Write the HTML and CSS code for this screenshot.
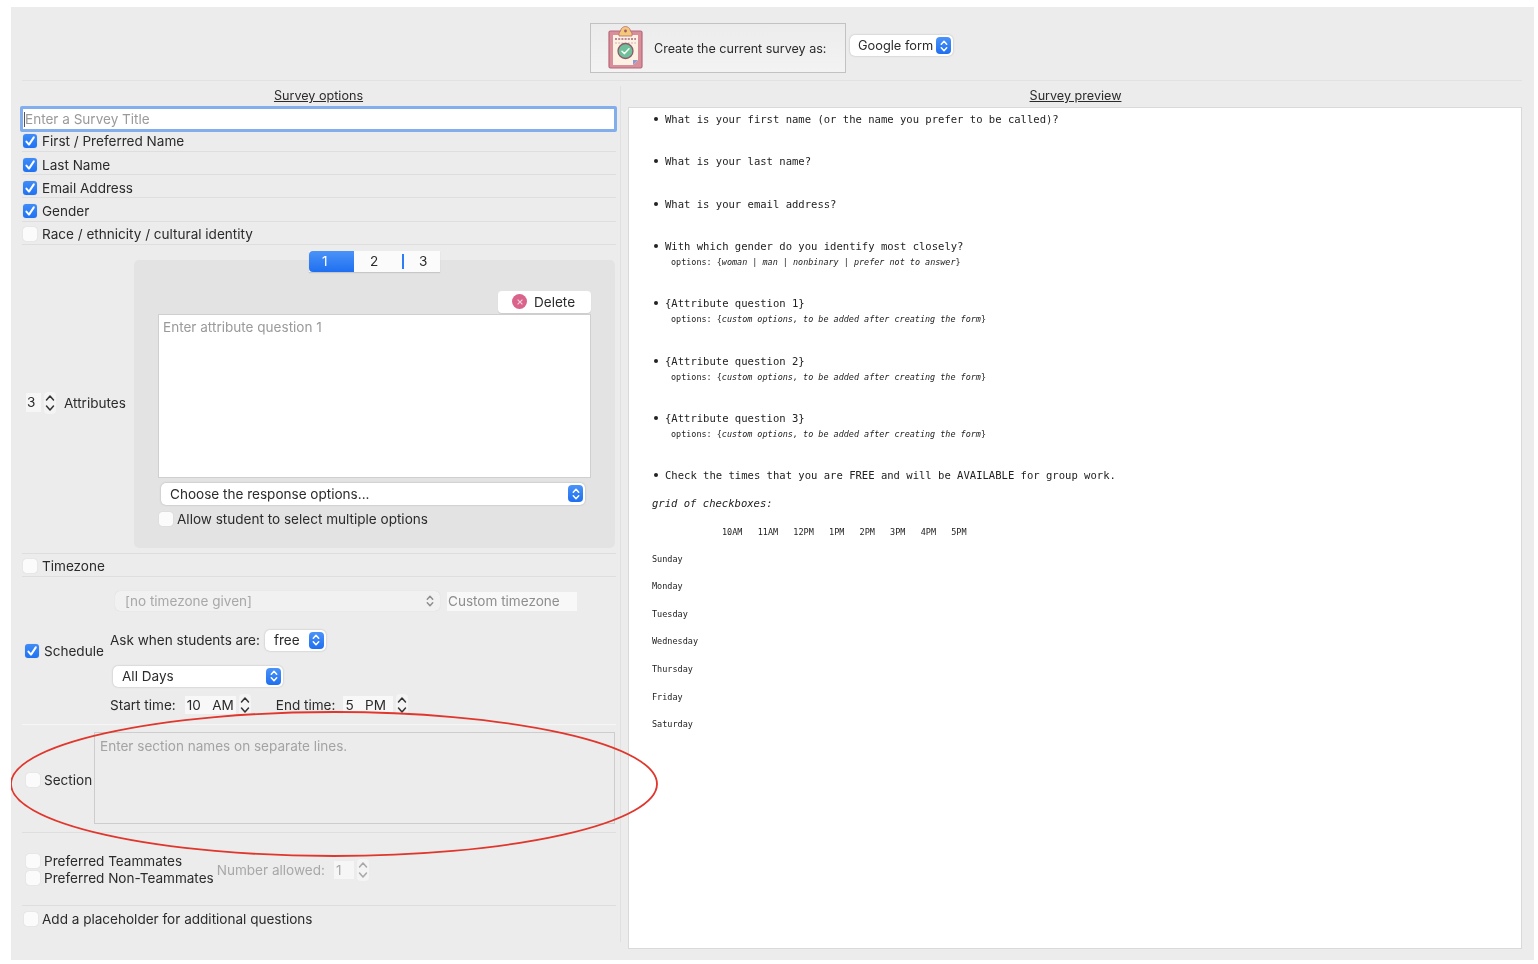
FILE: index.html
```html
<!DOCTYPE html>
<html lang="en">
<head>
  <meta charset="UTF-8" />
  <title>Survey maker</title>
  <link rel="stylesheet" href="styles.css">
</head>
<body>
  <svg class="defs" width="0" height="0">
    <symbol id="tick" viewBox="0 0 14 14"><path d="M3.4 7.6 6 10.6 10.8 3.4" fill="none" stroke="#fff" stroke-width="2" stroke-linecap="round" stroke-linejoin="round"/></symbol>
    <symbol id="updown" viewBox="0 0 14 20"><path d="M4 8 7 4.8 10 8M4 12 7 15.2 10 12" fill="none" stroke="currentColor" stroke-width="1.7" stroke-linecap="round" stroke-linejoin="round"/></symbol>
    <symbol id="spin-arrows" viewBox="0 0 12 22"><path d="M2.500 8 6 4 9.500 8M2.500 14 6 18 9.500 14" fill="none" stroke="currentColor" stroke-width="1.500" stroke-linecap="round" stroke-linejoin="round"/></symbol>
  </svg>

  <div class="window">
    <header class="topbar">
      <button class="create-btn" type="button">
        <svg class="clipboard" width="36" height="44" viewBox="0 0 36 44">
          <rect x="1" y="5" width="33" height="37" rx="1.5" fill="#d78f9a" stroke="#b8677a" stroke-width="1.2"/>
          <path d="M5 9H30V34L25 39H5Z" fill="#fdf1e4"/>
          <path d="M25 39V34H30Z" fill="#8f9ad0"/>
          <path d="M11 7 12.5 5C13 1.5 16 .5 17.5 .5S22 1.5 22.500 5L24 7V10H11Z" fill="#f2c879" stroke="#b8677a" stroke-width=".8"/>
          <circle cx="17.500" cy="5" r="1.400" fill="#a8566b"/>
          <path d="M7 13H28" stroke="#b98a94" stroke-width="2" stroke-dasharray="2 1.200"/>
          <path d="M7 17H28" stroke="#cfb2b5" stroke-width="1" stroke-dasharray="2 1.200"/>
          <circle cx="17.500" cy="25" r="7.500" fill="#6fc09a" stroke="#8c5a6a" stroke-width="1.300"/>
          <path d="M14 25.200 16.500 27.600 21 22.800" fill="none" stroke="#f3fff7" stroke-width="1.500" stroke-linecap="round" stroke-linejoin="round"/>
        </svg>
        <span>Create the current survey as:</span>
      </button>
      <div class="select select-form">
        <span>Google form</span>
        <span class="select-arrow"><svg width="14" height="18"><use href="#updown"/></svg></span>
      </div>
    </header>

    <div class="columns">
      <section class="options">
        <h2 class="col-title">Survey options</h2>
        <input class="title-input" type="text" placeholder="Enter a Survey Title">

        <div class="row row-first"><span class="box on"><svg width="14" height="14"><use href="#tick"/></svg></span>First / Preferred Name</div>
        <div class="row"><span class="box on"><svg width="14" height="14"><use href="#tick"/></svg></span>Last Name</div>
        <div class="row"><span class="box on"><svg width="14" height="14"><use href="#tick"/></svg></span>Email Address</div>
        <div class="row"><span class="box on"><svg width="14" height="14"><use href="#tick"/></svg></span>Gender</div>
        <div class="row"><span class="box"></span>Race / ethnicity / cultural identity</div>

        <div class="attributes">
          <div class="attr-count">
            <span class="spin-value">3</span>
            <span class="spinner"><svg width="12" height="22"><use href="#spin-arrows"/></svg></span>
            <span class="attr-label">Attributes</span>
          </div>
          <div class="attr-panel">
            <div class="tabs">
              <span class="tab tab-active">1</span>
              <span class="tab tab-mid">2</span>
              <span class="tab tab-last">3</span>
            </div>
            <div class="delete-wrap">
              <button class="delete-btn" type="button">
                <span class="delete-icon"><svg width="14" height="14" viewBox="0 0 14 14"><path d="M4.600 4.600 9.400 9.400M9.400 4.600 4.600 9.400" stroke="#f6d5de" stroke-width="1.100"/></svg></span>
                Delete
              </button>
            </div>
            <textarea class="attr-question" placeholder="Enter attribute question 1"></textarea>
            <div class="select select-response">
              <span>Choose the response options...</span>
              <span class="select-arrow"><svg width="14" height="18"><use href="#updown"/></svg></span>
            </div>
            <div class="multi"><span class="box"></span>Allow student to select multiple options</div>
          </div>
        </div>

        <div class="row row-timezone"><span class="box"></span>Timezone</div>

        <div class="tz-controls">
          <div class="select select-tz">
            <span>[no timezone given]</span>
            <svg class="tz-arrow" width="14" height="18"><use href="#updown"/></svg>
          </div>
          <input class="tz-custom" type="text" placeholder="Custom timezone">
        </div>

        <div class="schedule">
          <div class="schedule-check"><span class="box on"><svg width="14" height="14"><use href="#tick"/></svg></span>Schedule</div>
          <div class="schedule-body">
            <div class="ask">
              Ask when students are:
              <div class="select select-free">
                <span>free</span>
                <span class="select-arrow"><svg width="14" height="18"><use href="#updown"/></svg></span>
              </div>
            </div>
            <div class="select select-days">
              <span>All Days</span>
              <span class="select-arrow"><svg width="14" height="18"><use href="#updown"/></svg></span>
            </div>
          </div>
        </div>
        <div class="times">
          <span>Start time:</span>
          <span class="time-value time-start">10&nbsp;&nbsp;&nbsp;AM</span>
          <span class="spinner"><svg width="12" height="22"><use href="#spin-arrows"/></svg></span>
          <span class="end-label">End time:</span>
          <span class="time-value time-end">5&nbsp;&nbsp;&nbsp;PM</span>
          <span class="spinner"><svg width="12" height="22"><use href="#spin-arrows"/></svg></span>
        </div>

        <div class="section-row">
          <div class="section-check"><span class="box"></span>Section</div>
          <textarea class="section-names" placeholder="Enter section names on separate lines."></textarea>
        </div>

        <div class="teammates">
          <div class="team-checks">
            <div class="team-line"><span class="box"></span>Preferred Teammates</div>
            <div class="team-line"><span class="box"></span>Preferred Non-Teammates</div>
          </div>
          <span class="number-label">Number allowed:</span>
          <span class="number-value">1</span>
          <span class="spinner spinner-off"><svg width="12" height="22"><use href="#spin-arrows"/></svg></span>
        </div>

        <div class="row row-extra"><span class="box"></span>Add a placeholder for additional questions</div>
      </section>

      <section class="preview-col">
        <h2 class="col-title">Survey preview</h2>
        <div class="preview">
          <div class="q"><p class="q-text">What is your first name (or the name you prefer to be called)?</p></div>
          <div class="q"><p class="q-text">What is your last name?</p></div>
          <div class="q"><p class="q-text">What is your email address?</p></div>
          <div class="q">
            <p class="q-text">With which gender do you identify most closely?</p>
            <p class="q-opts">options: {<i>woman</i> | <i>man</i> | <i>nonbinary</i> | <i>prefer not to answer</i>}</p>
          </div>
          <div class="q">
            <p class="q-text">{Attribute question 1}</p>
            <p class="q-opts">options: {<i>custom options, to be added after creating the form</i>}</p>
          </div>
          <div class="q">
            <p class="q-text">{Attribute question 2}</p>
            <p class="q-opts">options: {<i>custom options, to be added after creating the form</i>}</p>
          </div>
          <div class="q">
            <p class="q-text">{Attribute question 3}</p>
            <p class="q-opts">options: {<i>custom options, to be added after creating the form</i>}</p>
          </div>
          <div class="q q-last"><p class="q-text">Check the times that you are FREE and will be AVAILABLE for group work.</p></div>
          <p class="grid-note">grid of checkboxes:</p>
          <div class="hours">
            <span>10AM</span><span>11AM</span><span>12PM</span><span>1PM</span><span>2PM</span><span>3PM</span><span>4PM</span><span>5PM</span>
          </div>
          <ul class="days">
            <li>Sunday</li>
            <li>Monday</li>
            <li>Tuesday</li>
            <li>Wednesday</li>
            <li>Thursday</li>
            <li>Friday</li>
            <li>Saturday</li>
          </ul>
        </div>
      </section>
    </div>

    <svg class="ring" width="660" height="156" viewBox="0 0 660 156">
      <ellipse cx="324" cy="78" rx="323" ry="72" fill="none" stroke="#e0362c" stroke-width="1.800"/>
    </svg>
  </div>
</body>
</html>
```

FILE: styles.css
```css
* {
  box-sizing: border-box;
}

body {
  margin: 0;
  background: #fff;
  font-family: Inter, Roboto, "Liberation Sans", sans-serif;
  font-size: 13.550px;
  color: #2b2b2b;
}

.defs {
  position: absolute;
}

.window {
  position: relative;
  width: 1523px;
  height: 953px;
  margin: 7px 0 0 11px;
  background: #ececec;
  overflow: hidden;
  filter: blur(.45px);
}

/* top bar */
.topbar {
  display: flex;
  align-items: flex-start;
  height: 74px;
  padding: 16px 0 0 568px;
  margin: 0 12px 0 11px;
  border-bottom: 1px solid #e2e2e2;
}

.create-btn {
  display: flex;
  align-items: center;
  width: 256px;
  height: 50px;
  padding: 0 0 0 17px;
  border: 1.500px solid #c2c2c2;
  background: linear-gradient(#ececec, #f3f3f3);
  font: inherit;
  font-size: 12.550px;
  color: #2b2b2b;
}

.clipboard {
  margin-right: 10px;
}

.select {
  display: flex;
  align-items: center;
  justify-content: space-between;
  height: 21px;
  padding-left: 9px;
  padding-right: 3px;
  background: #fff;
  border-radius: 5px;
  box-shadow: 0 0 2px rgba(0, 0, 0, .25);
}

.select-arrow {
  display: flex;
  align-items: center;
  justify-content: center;
  width: 15px;
  height: 17px;
  border-radius: 4px;
  background: linear-gradient(#4b93f8, #1f6ff0);
  color: #fff;
}

.select-form {
  width: 103px;
  margin: 12px 0 0 4px;
  padding-left: 8px;
  padding-right: 2px;
  font-size: 12.800px;
}

/* columns */
.columns {
  display: flex;
  height: 868px;
}

.options {
  width: 598px;
  margin-left: 11px;
  padding-right: 5px;
}

.col-title {
  margin: 0;
  height: 25px;
  padding-top: 7px;
  font-size: 12.600px;
  font-weight: 400;
  line-height: 16px;
  text-align: center;
  text-decoration: underline;
}

.title-input {
  display: block;
  width: 597px;
  height: 26px;
  margin-left: -2px;
  padding: 0 2px;
  border: 3px solid #82aeee;
  border-radius: 2px;
  outline: 0;
  background: #fff linear-gradient(#555, #555) 1px center / 1px 15px no-repeat;
  font: inherit;
}

input::placeholder,
textarea::placeholder {
  color: #9a9a9a;
  opacity: 1;
}

.row {
  display: flex;
  align-items: center;
  gap: 5px;
  height: 23.200px;
  padding: 3px 0 0 1px;
  border-bottom: 1px solid #dedede;
  width: 594px;
}

.row-first {
  height: 20px;
  padding: 0 0 2px 1px;
}

.box {
  display: inline-flex;
  flex: none;
  width: 14px;
  height: 14px;
  border-radius: 3px;
  background: #fbfbfb;
  box-shadow: 0 0 1px rgba(0, 0, 0, .2);
}

.box.on {
  background: linear-gradient(#3f8cf8, #1f72f2);
}

/* attributes */
.attributes {
  display: flex;
  height: 309px;
  border-bottom: 1px solid #dedede;
  width: 594px;
}

.attr-count {
  display: flex;
  align-items: center;
  width: 112px;
  padding-left: 4px;
  padding-top: 8px;
}

.spin-value {
  width: 15px;
  height: 19px;
  padding-left: 1px;
  line-height: 19px;
  background: #f6f6f6;
}

.spinner {
  display: inline-flex;
  flex: none;
  width: 12px;
  height: 22px;
  margin-left: 3px;
  border-radius: 4px;
  background: #f4f4f4;
  color: #333;
}

.attr-label {
  margin-left: 8px;
}

.attr-panel {
  display: flex;
  flex-direction: column;
  width: 481px;
  height: 288px;
  margin-top: 15px;
  padding: 0 24px;
  border-radius: 5px;
  background: #e3e3e3;
}

.tabs {
  display: flex;
  align-self: center;
  height: 21px;
  margin-top: -9px;
  background: #fbfbfb;
  box-shadow: 0 1px 1px rgba(0, 0, 0, .12);
}

.tab {
  line-height: 21px;
}

.tab-active {
  width: 45px;
  padding-left: 13px;
  border-radius: 4px 0 0 4px;
  background: linear-gradient(#4b93f8, #1f6ff0);
  color: #fff;
}

.tab-mid {
  width: 48px;
  padding-left: 16px;
}

.tab-last {
  width: 38px;
  padding-left: 17px;
  background: linear-gradient(#2f7df6, #2f7df6) left center / 2px 15px no-repeat;
}

.delete-wrap {
  display: flex;
  justify-content: flex-end;
  margin-top: 19px;
}

.delete-btn {
  display: flex;
  align-items: center;
  gap: 7px;
  width: 93px;
  height: 22px;
  padding: 0 0 0 14px;
  border: 0;
  border-radius: 4px;
  background: #fff;
  box-shadow: 0 1px 1px rgba(0, 0, 0, .1);
  font: inherit;
  color: #2b2b2b;
}

.delete-icon {
  display: inline-flex;
  align-items: center;
  justify-content: center;
  width: 15px;
  height: 15px;
  border-radius: 50%;
  background: #d9638a;
}

.attr-question {
  display: block;
  width: 433px;
  height: 164px;
  margin-top: 1px;
  padding: 4px 4px;
  border: 1px solid #cfcfcf;
  background: #fff;
  font: inherit;
  resize: none;
}

.select-response {
  width: 424px;
  height: 22px;
  margin: 5px 0 0 3px;
  padding-left: 9px;
  padding-right: 2px;
}

.multi {
  display: flex;
  align-items: center;
  gap: 4px;
  height: 14px;
  margin: 7px 0 0 1px;
}

.row-timezone {
  height: 23px;
}

.tz-controls {
  display: flex;
  align-items: flex-start;
  gap: 7px;
  padding: 14px 0 0 93px;
  color: #a8a8a8;
}

.select-tz {
  width: 325px;
  height: 20px;
  padding-left: 10px;
  background: #f1f1f1;
  box-shadow: 0 0 1px rgba(0, 0, 0, .15);
}

.tz-arrow {
  color: #8f8f8f;
}

.tz-custom {
  width: 130px;
  height: 19px;
  margin-top: 1px;
  padding: 0 1px;
  border: 0;
  background: #f8f8f8;
  font: inherit;
}

.tz-custom::placeholder {
  color: #8e8e8e;
}

.schedule {
  display: flex;
  margin-top: 19px;
}

.schedule-check {
  display: flex;
  align-items: center;
  align-self: flex-start;
  gap: 5px;
  width: 88px;
  padding: 13px 0 0 3px;
}

.schedule-body {
  display: flex;
  flex-direction: column;
  gap: 15px;
}

.ask {
  display: flex;
  align-items: center;
  gap: 5px;
}

.select-free {
  width: 61px;
  padding-right: 2px;
}

.select-days {
  width: 170px;
  margin-left: 3px;
  padding-right: 2px;
}

.times {
  display: flex;
  align-items: center;
  height: 22px;
  margin-top: 7px;
  padding-left: 88px;
}

.time-value {
  height: 18px;
  line-height: 18px;
  padding-left: 2px;
  background: #f8f8f8;
}

.time-start {
  width: 51px;
  margin-left: 9px;
}

.end-label {
  margin-left: 25px;
}

.time-end {
  width: 50px;
  margin-left: 8px;
}

.section-row {
  display: flex;
  align-items: center;
  width: 594px;
  height: 109px;
  margin-top: 8px;
  border-top: 1px solid #f6f6f6;
  border-bottom: 1px solid #dedede;
}

.section-check {
  display: flex;
  align-items: center;
  gap: 4px;
  width: 72px;
  padding: 4px 0 0 4px;
  flex: none;
}

.section-names {
  display: block;
  width: 521px;
  height: 92px;
  padding: 5px;
  border: 1px solid #cdcdcd;
  background: #ececec;
  font: inherit;
  resize: none;
}

.section-names::placeholder {
  color: #a3a3a3;
}

.teammates {
  display: flex;
  align-items: center;
  height: 73px;
  width: 594px;
  padding: 2px 0 0 4px;
  border-bottom: 1px solid #dedede;
}

.team-line {
  display: flex;
  align-items: center;
  gap: 4px;
  height: 17px;
}

.number-label {
  margin-left: 3px;
  color: #a8a8a8;
}

.number-value {
  width: 20px;
  height: 18px;
  margin-left: 9px;
  padding-left: 2px;
  line-height: 18px;
  background: #f6f6f6;
  color: #a8a8a8;
}

.spinner-off {
  color: #a8a8a8;
}

.row-extra {
  height: 26px;
  gap: 4px;
  border: 0;
  padding: 0 0 0 2px;
}

/* preview */
.preview-col {
  width: 903px;
  padding-left: 7px;
  border-left: 1px solid #e0e0e0;
  margin-top: 5px;
  margin-bottom: 7px;
}

.preview-col .col-title {
  height: 21px;
  padding-top: 2px;
}

.preview {
  width: 894px;
  height: 842px;
  padding: 4px 0 0 23px;
  border: 1px solid #d9d9d9;
  background: #fff;
  font-family: "DejaVu Sans Mono", monospace;
  color: #222;
}

.q {
  position: relative;
  height: 42.300px;
  padding-left: 13px;
}

.q::before {
  content: "";
  position: absolute;
  left: 2px;
  top: 5px;
  width: 4px;
  height: 4px;
  border-radius: 50%;
  background: #222;
}

.q:nth-child(n+4) {
  height: 57.400px;
}

.q-last {
  height: 27px !important;
}

.q-text {
  margin: 0;
  font-size: 10.550px;
  line-height: 14px;
}

.q-opts {
  margin: 2px 0 0 6px;
  font-size: 8.450px;
  line-height: 14px;
}

.grid-note {
  margin: 1px 0 0;
  font-style: italic;
  font-size: 10.550px;
  line-height: 14px;
}

.hours {
  display: flex;
  gap: 15.200px;
  margin-top: 15px;
  padding-left: 70px;
  font-size: 8.500px;
  line-height: 14px;
}

.days {
  list-style: none;
  margin: -1.500px 0 0;
  padding: 0;
  font-size: 8.500px;
  line-height: 14px;
}

.days li {
  margin-top: 13.600px;
}

.ring {
  position: absolute;
  left: -1px;
  top: 699px;
  pointer-events: none;
}
```
